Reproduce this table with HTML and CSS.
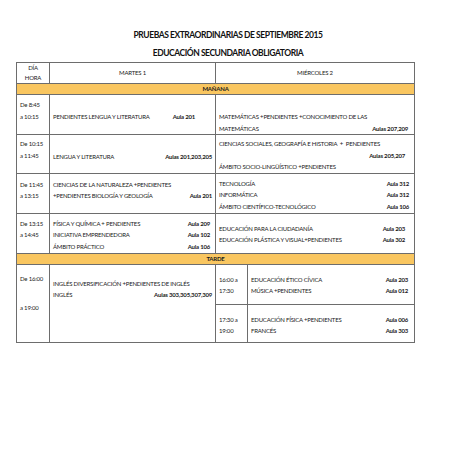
FILE: index.html
```html
<!DOCTYPE html>
<html lang="es">
<head>
<meta charset="utf-8">
<title>Pruebas extraordinarias</title>
<link rel="stylesheet" href="styles.css">
</head>
<body>
<div class="titles">
  <div class="t">PRUEBAS EXTRAORDINARIAS DE SEPTIEMBRE 2015</div>
  <div class="t">EDUCACIÓN SECUNDARIA OBLIGATORIA</div>
</div>
<table class="sched">
  <colgroup>
    <col class="w1"><col class="w2"><col class="w3"><col class="w4">
  </colgroup>
  <tr class="hd">
    <td class="center"><div>DÍA</div><div>HORA</div></td>
    <td class="center">MARTES 1</td>
    <td class="center" colspan="2">MIÉRCOLES 2</td>
  </tr>
  <tr class="band"><td colspan="4">MAÑANA</td></tr>
  <tr class="r1">
    <td class="time p4"><div>De 8:45</div><div>a 10:15</div></td>
    <td class="p16 pr20"><div class="ln"><span>PENDIENTES LENGUA Y LITERATURA</span><b>Aula 201</b></div></td>
    <td colspan="2" class="p16 pr6">
      <div class="ln"><span>MATEMÁTICAS +PENDIENTES +CONOCIMIENTO DE LAS</span></div>
      <div class="ln"><span>MATEMÁTICAS</span><b>Aulas 207,209</b></div>
    </td>
  </tr>
  <tr class="r2">
    <td class="time p3"><div>De 10:15</div><div>a 11:45</div></td>
    <td class="p16"><div class="ln"><span>LENGUA Y LITERATURA</span><b>Aulas 201,203,205</b></div></td>
    <td colspan="2" class="p3 pr9">
      <div class="ln"><span>CIENCIAS SOCIALES, GEOGRAFÍA E HISTORIA &nbsp;+ &nbsp;PENDIENTES</span></div>
      <div class="ln"><span></span><b>Aulas 205,207</b></div>
      <div class="ln"><span>ÁMBITO SOCIO-LINGÜÍSTICO +PENDIENTES</span></div>
    </td>
  </tr>
  <tr class="r3">
    <td class="time p5"><div>De 11:45</div><div>a 13:15</div></td>
    <td class="p5">
      <div class="ln"><span>CIENCIAS DE LA NATURALEZA +PENDIENTES</span></div>
      <div class="ln"><span>+PENDIENTES BIOLOGÍA Y GEOLOGÍA</span><b>Aula 201</b></div>
    </td>
    <td colspan="2" class="p4 pr5">
      <div class="ln"><span>TECNOLOGÍA</span><b>Aula 312</b></div>
      <div class="ln"><span>INFORMÁTICA</span><b>Aula 312</b></div>
      <div class="ln"><span>ÁMBITO CIENTÍFICO-TECNOLÓGICO</span><b>Aula 106</b></div>
    </td>
  </tr>
  <tr class="r4">
    <td class="time p4"><div>De 13:15</div><div>a 14:45</div></td>
    <td class="p4 pr5">
      <div class="ln"><span>FÍSICA Y QUÍMICA + PENDIENTES</span><b>Aula 209</b></div>
      <div class="ln"><span>INICIATIVA EMPRENDEDORA</span><b>Aula 102</b></div>
      <div class="ln"><span>ÁMBITO PRÁCTICO</span><b>Aula 106</b></div>
    </td>
    <td colspan="2" class="p10 pr9">
      <div class="ln"><span>EDUCACIÓN PARA LA CIUDADANÍA</span><b>Aula 203</b></div>
      <div class="ln"><span>EDUCACIÓN PLÁSTICA Y VISUAL+PENDIENTES</span><b>Aula 302</b></div>
    </td>
  </tr>
  <tr class="band"><td colspan="4">TARDE</td></tr>
  <tr class="ra">
    <td rowspan="2" class="time p9"><div>De 16:00</div><div class="gap">a 19:00</div></td>
    <td rowspan="2" class="p14">
      <div class="ln"><span>INGLÉS DIVERSIFICACIÓN +PENDIENTES DE INGLÉS</span></div>
      <div class="ln"><span>INGLÉS</span><b>Aulas 303,305,307,309</b></div>
    </td>
    <td class="time p10"><div>16:00 a</div><div>17:30</div></td>
    <td class="p10 pr6">
      <div class="ln"><span>EDUCACIÓN ÉTICO CÍVICA</span><b>Aula 203</b></div>
      <div class="ln"><span>MÚSICA +PENDIENTES</span><b>Aula 012</b></div>
    </td>
  </tr>
  <tr class="rb">
    <td class="time p10"><div>17:30 a</div><div>19:00</div></td>
    <td class="p10 pr6">
      <div class="ln"><span>EDUCACIÓN FÍSICA +PENDIENTES</span><b>Aula 006</b></div>
      <div class="ln"><span>FRANCÉS</span><b>Aula 303</b></div>
    </td>
  </tr>
</table>
</body>
</html>
```
FILE: styles.css
```css
html, body {
  margin: 0;
  padding: 0;
  background: #fff;
}
body {
  font-family: Lato, "Liberation Sans", sans-serif;
  color: #1a1a1a;
  width: 452px;
  height: 452px;
}
.titles {
  padding-top: 26px;
  text-align: center;
  font-weight: 700;
  font-size: 8.5px;
  color: #111;
  padding-left: 4px;
}
.titles .t {
  line-height: 18px;
  letter-spacing: -0.45px;
}
.sched {
  margin-left: 16px;
  width: 398px;
  table-layout: fixed;
  border-collapse: collapse;
  font-size: 6px;
  letter-spacing: -0.2px;
}
.w1 { width: 33px; }
.w2 { width: 166px; }
.w3 { width: 32px; }
.w4 { width: 167px; }
.sched td {
  border: 1px solid #6d6d6d;
  padding: 0 3px 0 3px;
  vertical-align: top;
  line-height: 11.5px;
  white-space: nowrap;
  overflow: hidden;
}
.sched td.center {
  text-align: center;
  vertical-align: middle;
  line-height: 10px;
}
.hd { height: 21px; }
.band td {
  background: #f9c660;
  text-align: center;
  font-weight: 700;
  height: 10px;
  line-height: 10px;
  padding: 0;
}
.r1 { height: 39px; }
.r2 { height: 38px; }
.r3 { height: 40px; }
.r4 { height: 40px; }
.ra { height: 40px; }
.rb { height: 38px; }
.ln {
  display: flex;
  justify-content: space-between;
}
.ln b { font-weight: 700; }
.time { padding-left: 2px; }
.gap { margin-top: 18px; }
.sched td.p3 { padding-top: 3px; }
.sched td.p4 { padding-top: 4px; }
.sched td.p5 { padding-top: 5px; }
.sched td.p9 { padding-top: 8px; }
.sched td.p10 { padding-top: 9px; }
.sched td.p14 { padding-top: 13px; }
.sched td.p16 { padding-top: 16px; }
.sched td.pr20 { padding-right: 20px; }
.sched td.pr9 { padding-right: 9px; }
.sched td.pr6 { padding-right: 6px; }
.sched td.pr5 { padding-right: 5px; }
```
